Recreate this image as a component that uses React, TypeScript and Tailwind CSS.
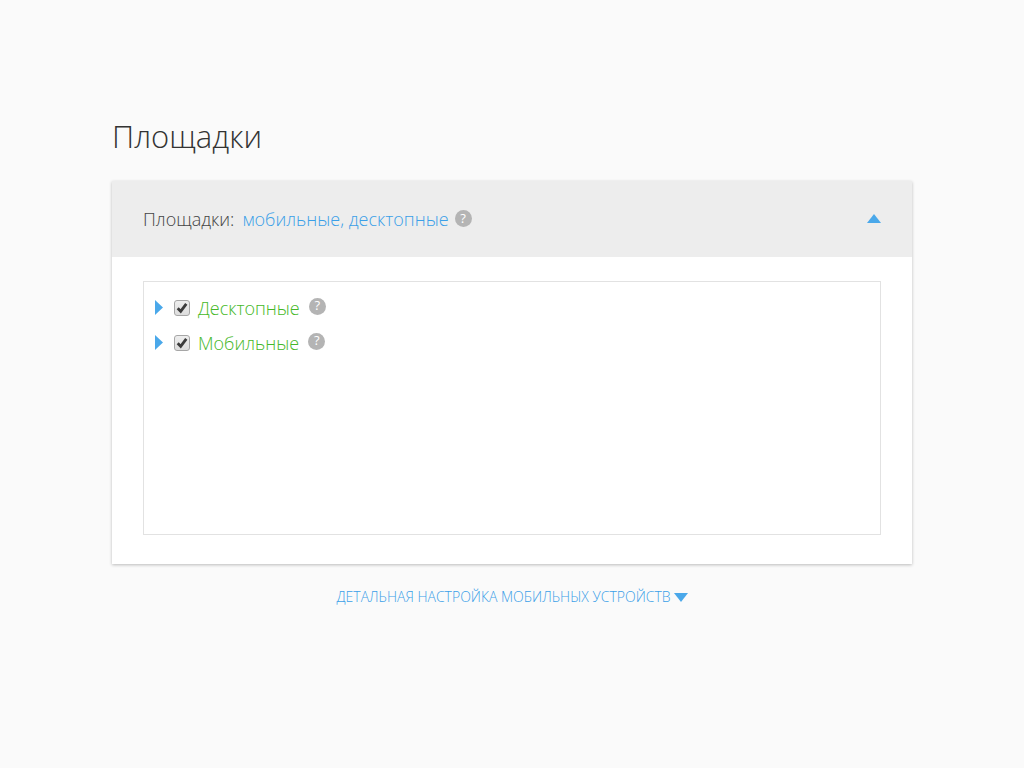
import { useState } from 'react'
import clsx from 'clsx'

const platforms = [
  { id: 'desktop', name: 'Десктопные' },
  { id: 'mobile', name: 'Мобильные' },
]

function HelpButton({ label, className }: { label: string; className?: string }) {
  return (
    <button
      type="button"
      aria-label={label}
      className={clsx(
        'flex h-[17px] w-[17px] shrink-0 items-center justify-center rounded-full bg-[#b4b4b4] text-[13px] font-normal text-white',
        className
      )}
    >
      ?
    </button>
  )
}

export default function App() {
  const [checked, setChecked] = useState<Record<string, boolean>>({ desktop: true, mobile: true })

  return (
    <main className="min-h-screen bg-[#fafafa] px-28 pt-28 font-['Open_Sans',sans-serif] font-light text-[#333]">
      <h1 className="text-[31px] leading-[48px]">Площадки</h1>

      {/* Panel */}
      <section className="mt-[21px] bg-white shadow-[0_1px_3px_rgba(0,0,0,0.25)]">
        <header className="flex h-19 items-center bg-[#ededed] px-[31px] pb-px text-lg">
          <span className="text-[#444]">Площадки:</span>
          <a href="#platforms" className="mr-1.5 ml-2 text-[#3a9fe8]">
            мобильные, десктопные
          </a>
          <HelpButton label="Справка: площадки" />
          <button type="button" aria-label="Свернуть" className="ml-auto">
            <svg className="h-[9px] w-[14px] fill-[#4aa8ea]" viewBox="0 0 14 9">
              <path d="M0 9 7 0l7 9Z" />
            </svg>
          </button>
        </header>

        <div className="px-[31px] pt-6 pb-[29px]">
          <ul id="platforms" className="min-h-[254px] border border-[#e2e2e2] px-[11px] pt-2">
            {platforms.map((item) => (
              <li key={item.id} className="flex h-[35px] items-center">
                <button type="button" aria-label={`Развернуть: ${item.name}`}>
                  <svg className="h-[15px] w-2 fill-[#4aa8ea]" viewBox="0 0 8 15">
                    <path d="M0 0 8 7.500 0 15Z" />
                  </svg>
                </button>
                <span className="ml-[11px] grid">
                  <input
                    id={item.id}
                    type="checkbox"
                    checked={checked[item.id]}
                    onChange={(e) => setChecked({ ...checked, [item.id]: e.target.checked })}
                    className="peer col-start-1 row-start-1 h-4 w-4 appearance-none rounded-[3px] border border-[#a6a6a6] bg-linear-to-b from-[#eee] to-[#ddd]"
                  />
                  <svg
                    className="pointer-events-none invisible col-start-1 row-start-1 h-4 w-4 fill-none stroke-[#3c3c3c] peer-checked:visible"
                    viewBox="0 0 16 16"
                  >
                    <path d="m3.700 8.300 3 3 5.600-7.500" strokeWidth="2.800" />
                  </svg>
                </span>
                <label htmlFor={item.id} className="mr-[9px] ml-2 text-lg text-[#45b828]">
                  {item.name}
                </label>
                <HelpButton label={`Справка: ${item.name}`} className="mb-[3px]" />
              </li>
            ))}
          </ul>
        </div>
      </section>

      <div className="mt-[21px] flex justify-center">
        <a href="#details" className="flex items-center gap-[3px] text-sm leading-6 text-[#3a9fe8] uppercase">
          Детальная настройка мобильных устройств
          <svg className="h-[9px] w-[14px] fill-[#4aa8ea]" viewBox="0 0 14 9">
            <path d="M0 0h14L7 9Z" />
          </svg>
        </a>
      </div>
    </main>
  )
}
